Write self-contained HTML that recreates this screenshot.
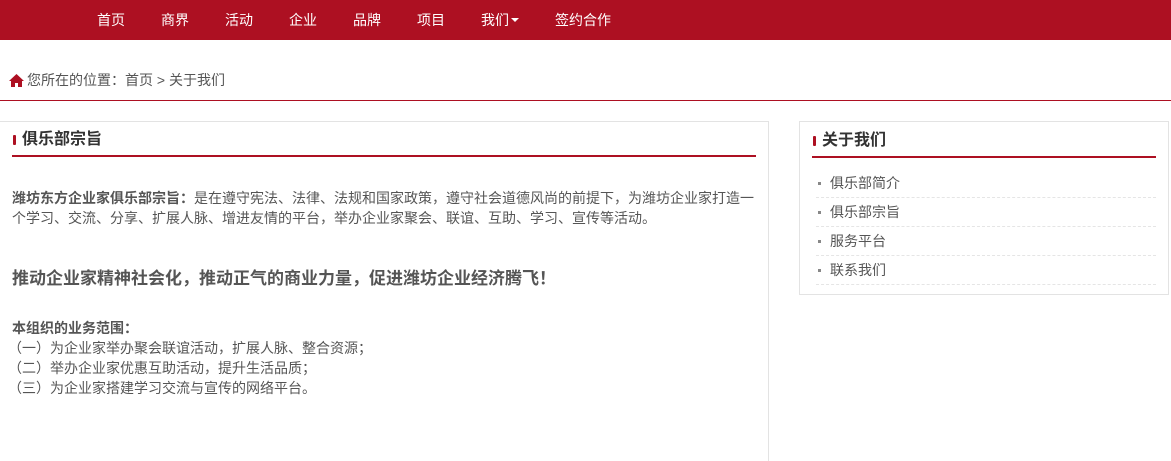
<!DOCTYPE html>
<html><head><meta charset="utf-8"><style>
*{margin:0;padding:0;box-sizing:border-box}
body{width:1171px;height:447px;overflow:hidden;background:#fff;font-family:"Liberation Sans","Noto Sans CJK SC",sans-serif;color:#555;font-size:14px;position:relative}
.nav{position:absolute;left:0;top:0;width:1171px;height:40px;background:#ad1022}
.nav span{position:absolute;top:11px;color:#fff;font-size:14px;line-height:18px}
.bc{position:absolute;left:9px;top:71px;font-size:14px;line-height:18px;color:#555}
.bc svg{vertical-align:-2px;margin-right:3px}
.redline{position:absolute;left:0;top:100px;width:1171px;height:1px;background:#ad1022}
.lp{position:absolute;left:0;top:121px;width:769px;height:340px;border-top:1px solid #e3e3e3;border-right:1px solid #e3e3e3}
.h{position:absolute;font-size:16px;font-weight:bold;color:#333;line-height:20px}
.h i{position:absolute;left:-9px;top:5px;width:3px;height:10px;background:#ad1022;border-radius:1px}
.ul{position:absolute;height:2px;background:#ad1022}
.t{position:absolute;left:12px;font-size:14px;line-height:20px;color:#555;white-space:nowrap}
.rp{position:absolute;left:799px;top:121px;width:370px;height:174px;border:1px solid #e3e3e3}
.li{position:absolute;left:16px;width:340px;height:29px;border-bottom:1px dashed #e5e5e5;font-size:14px;line-height:28px;color:#555;padding-left:14px}
.li:before{content:"";position:absolute;left:2px;top:13px;width:3px;height:3px;background:#888}
</style></head><body>
<div class="nav">
<span style="left:97px">首页</span><span style="left:161px">商界</span><span style="left:225px">活动</span><span style="left:289px">企业</span><span style="left:353px">品牌</span><span style="left:417px">项目</span><span style="left:481px">我们<b style="display:inline-block;width:0;height:0;border-left:4px solid transparent;border-right:4px solid transparent;border-top:4px solid #fff;vertical-align:3px;margin-left:2px"></b></span><span style="left:555px">签约合作</span>
</div>
<div class="bc"><svg width="15" height="13" viewBox="0 0 15 13"><path d="M7.5 0L0 7h2v6h4V9h3v4h4V7h2z" fill="#ad1022"/></svg>您所在的位置：首页 &gt; 关于我们</div>
<div class="redline"></div>
<div class="lp"></div>
<div class="h" style="left:22px;top:130px"><i></i>俱乐部宗旨</div>
<div class="ul" style="left:12px;top:155px;width:744px"></div>
<div class="t" style="top:188px"><b>潍坊东方企业家俱乐部宗旨：</b>是在遵守宪法、法律、法规和国家政策，遵守社会道德风尚的前提下，为潍坊企业家打造一</div>
<div class="t" style="top:208px">个学习、交流、分享、扩展人脉、增进友情的平台，举办企业家聚会、联谊、互助、学习、宣传等活动。</div>
<div class="t" style="top:268px;font-size:17px;font-weight:bold;line-height:22px">推动企业家精神社会化，推动正气的商业力量，促进潍坊企业经济腾飞！</div>
<div class="t" style="top:318px"><b>本组织的业务范围：</b></div>
<div class="t" style="top:338px;left:8px">（一）为企业家举办聚会联谊活动，扩展人脉、整合资源；</div>
<div class="t" style="top:358px;left:8px">（二）举办企业家优惠互助活动，提升生活品质；</div>
<div class="t" style="top:378px;left:8px">（三）为企业家搭建学习交流与宣传的网络平台。</div>
<div class="rp">
<div class="h" style="left:22px;top:9px"><i></i>关于我们</div>
<div class="ul" style="left:12px;top:34px;width:344px"></div>
<div class="li" style="top:47px">俱乐部简介</div>
<div class="li" style="top:76px">俱乐部宗旨</div>
<div class="li" style="top:105px">服务平台</div>
<div class="li" style="top:134px">联系我们</div>
</div>
</body></html>
